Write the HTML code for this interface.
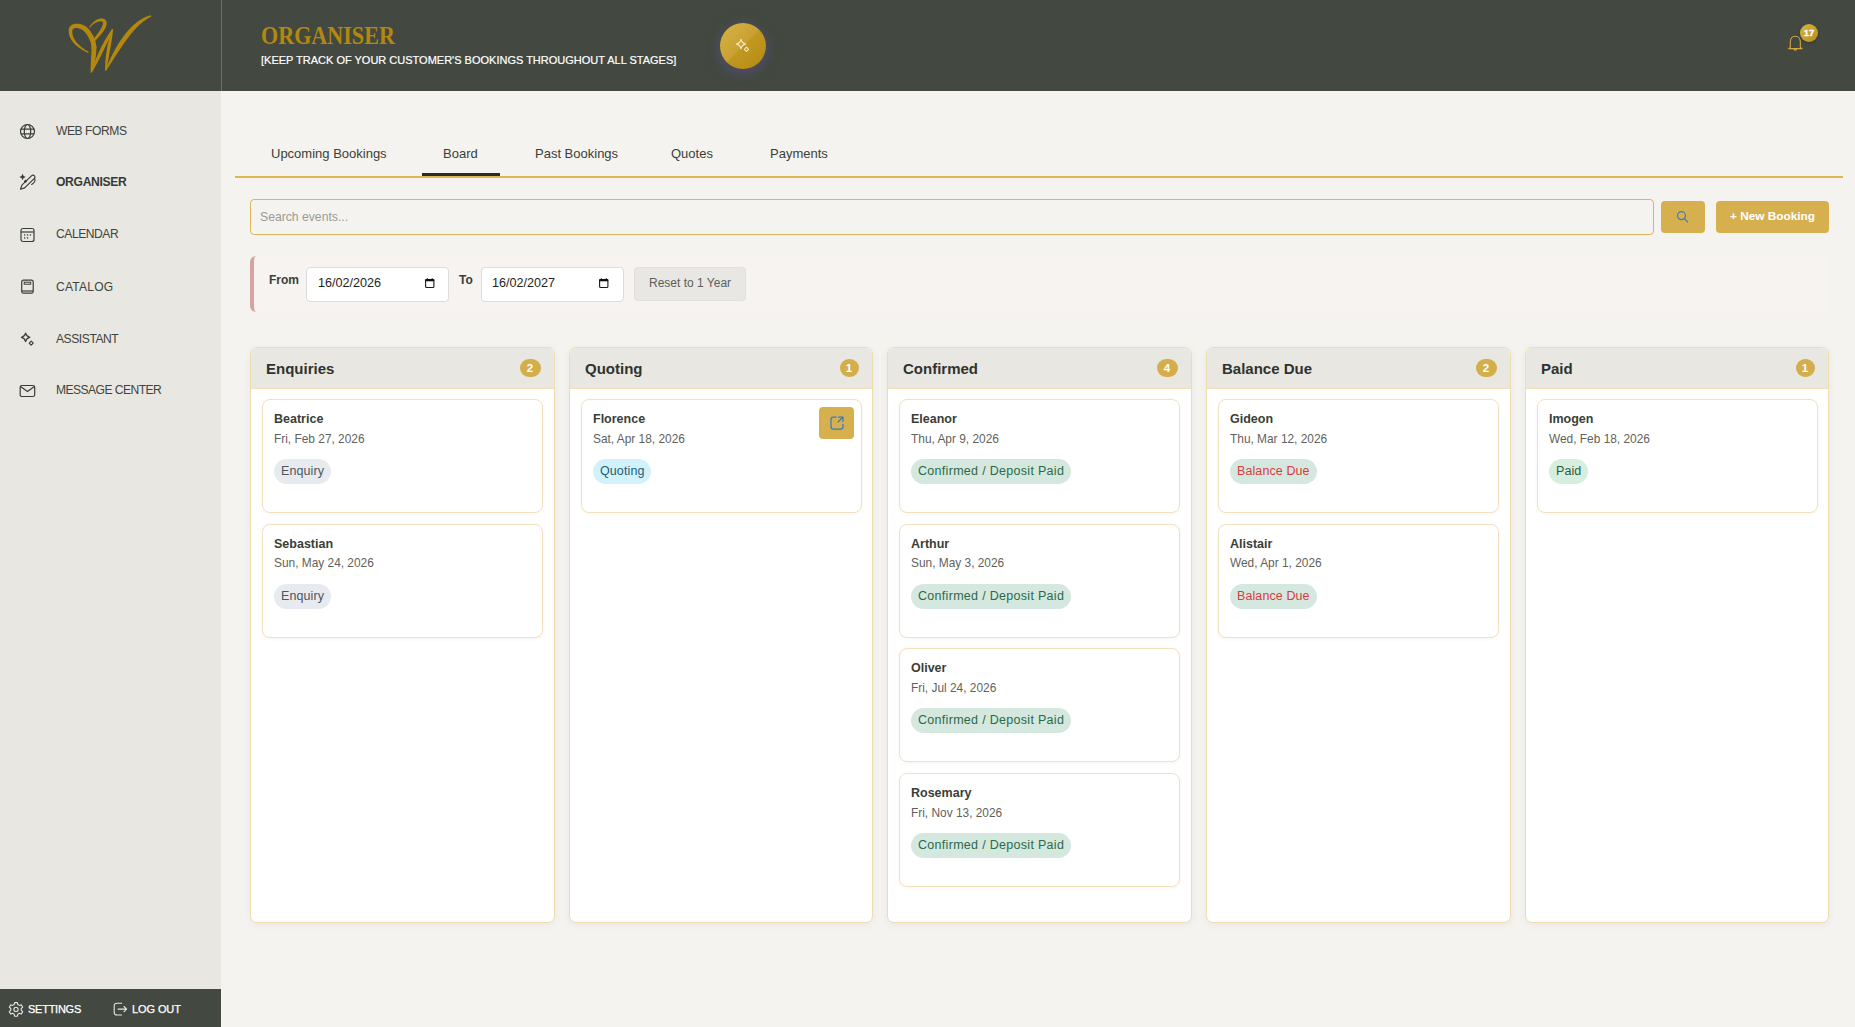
<!DOCTYPE html>
<html><head><meta charset="utf-8">
<style>
*{box-sizing:border-box;margin:0;padding:0}
html,body{width:1855px;height:1027px;overflow:hidden;background:#f4f3ef;font-family:"Liberation Sans",sans-serif;color:#3d4139}
.a{position:absolute}
.t{position:absolute;white-space:nowrap;line-height:1}
#hdr{left:0;top:0;width:1855px;height:91px;background:#434940}
#logoSep{left:221px;top:0;width:1px;height:91px;background:#6c706a}
#side{left:0;top:91px;width:221px;height:898px;background:#e9e7e2}
#sideBot{left:0;top:989px;width:221px;height:38px;background:#434940}
.nav{font-size:12.1px;color:#3f443c;letter-spacing:-0.45px}
.ico{position:absolute}
.tab{font-size:13px;color:#3b3f38}
.col{position:absolute;top:347px;width:305px;height:576px;background:#fff;border:1px solid #efdcb0;border-radius:7px;overflow:hidden;box-shadow:0 2px 8px rgba(0,0,0,0.05)}
.colh{position:absolute;left:0;top:0;right:0;height:41px;background:#e9e7e2;border-bottom:1px solid #f0dfb8}
.colt{position:absolute;left:15px;top:12.5px;font-size:15px;font-weight:700;color:#2f332d;line-height:1;white-space:nowrap}
.badge{position:absolute;top:11px;width:21px;height:18px;border-radius:9px;background:#d5ae4c;color:#fff;font-size:11.5px;font-weight:700;text-align:center;line-height:18px}
.card{position:absolute;left:11px;width:281px;height:114px;background:#fff;border:1px solid #f1e1bd;border-radius:8px;box-shadow:0 1px 4px rgba(0,0,0,0.04)}
.nm{position:absolute;left:11px;top:13px;font-size:12.5px;font-weight:700;color:#3a3e37;line-height:1;white-space:nowrap}
.dt{position:absolute;left:11px;top:33.5px;font-size:11.9px;color:#5f625c;line-height:1;white-space:nowrap}
.pill{position:absolute;left:11px;top:59px;height:25px;border-radius:13px;padding:0 7px 1px;font-size:12.5px;line-height:24px;white-space:nowrap;letter-spacing:0.1px}
.edit{position:absolute;right:7px;top:7px;width:35px;height:32px;border-radius:4px;background:#d6b04e;display:flex;align-items:center;justify-content:center}
.p-enq{background:#e7eaee;color:#4e5560}
.p-quo{background:#d2f2fb;color:#1f5d73}
.p-con{background:#d4e8df;color:#2a6a47;letter-spacing:0.3px}
.p-bal{background:#d4e8df;color:#dc3a3e}
.p-paid{background:#d6eede;color:#2a5c3c}
</style></head><body>

<!-- HEADER -->
<div class="a" id="hdr"></div>
<div class="a" id="logoSep"></div>
<svg class="a" style="left:0;top:0" width="221" height="91" viewBox="0 0 221 91"><g fill="#b3880c"><path d="M88.78,51.98 L88.02,51.53 L87.28,51.07 L86.54,50.60 L85.82,50.13 L85.10,49.66 L84.40,49.17 L83.70,48.69 L83.03,48.19 L82.36,47.70 L81.71,47.19 L81.07,46.68 L80.45,46.17 L79.85,45.64 L79.27,45.11 L78.70,44.58 L78.15,44.04 L77.63,43.50 L77.12,42.95 L76.64,42.39 L76.18,41.83 L75.74,41.26 L75.33,40.69 L74.94,40.11 L74.57,39.52 L74.23,38.94 L73.92,38.34 L73.63,37.74 L73.37,37.14 L73.14,36.53 L72.94,35.92 L72.76,35.30 L72.61,34.67 L72.49,34.04 L72.40,33.40 L72.34,32.75 L72.31,32.09 L72.30,31.43 L72.33,30.75 L72.39,30.10 L72.45,29.93 L72.54,29.71 L72.63,29.52 L72.75,29.34 L72.87,29.18 L73.01,29.04 L73.16,28.90 L73.33,28.77 L73.51,28.65 L73.72,28.54 L73.94,28.44 L74.19,28.34 L74.45,28.26 L74.74,28.18 L75.04,28.12 L75.36,28.08 L75.70,28.05 L76.06,28.03 L76.42,28.03 L76.80,28.04 L77.20,28.08 L77.60,28.12 L78.00,28.19 L78.42,28.28 L78.84,28.38 L79.26,28.50 L79.69,28.64 L80.11,28.79 L80.54,28.96 L80.96,29.16 L81.37,29.36 L81.79,29.59 L82.19,29.83 L82.59,30.09 L82.98,30.37 L83.37,30.66 L83.74,30.97 L84.09,31.29 L84.39,31.59 L84.71,31.97 L85.09,32.43 L85.45,32.88 L85.80,33.34 L86.13,33.79 L86.46,34.24 L86.77,34.69 L87.08,35.14 L87.37,35.58 L87.65,36.03 L87.92,36.47 L88.18,36.92 L88.42,37.36 L88.66,37.80 L88.89,38.24 L89.11,38.68 L89.31,39.12 L89.51,39.55 L89.70,39.99 L89.87,40.42 L90.04,40.86 L90.20,41.29 L90.35,41.72 L90.49,42.15 L90.62,42.58 L90.74,43.02 L90.85,43.45 L90.95,43.88 L91.05,44.31 L91.14,44.74 L91.21,45.17 L91.28,45.60 L91.35,46.03 L91.40,46.46 L91.44,46.89 L91.48,47.32 L91.51,47.75 L91.53,48.18 L91.54,48.64 L96.34,48.59 L96.34,48.09 L96.34,47.56 L96.32,47.03 L96.29,46.51 L96.25,45.98 L96.20,45.45 L96.14,44.92 L96.06,44.39 L95.98,43.86 L95.88,43.34 L95.78,42.81 L95.66,42.28 L95.53,41.75 L95.39,41.22 L95.23,40.70 L95.07,40.17 L94.89,39.64 L94.70,39.12 L94.50,38.59 L94.29,38.07 L94.07,37.55 L93.83,37.02 L93.58,36.50 L93.32,35.98 L93.05,35.46 L92.77,34.95 L92.47,34.43 L92.16,33.91 L91.84,33.40 L91.51,32.89 L91.17,32.38 L90.81,31.86 L90.44,31.36 L90.06,30.85 L89.67,30.34 L89.26,29.84 L88.85,29.33 L88.42,28.83 L87.91,28.26 L87.36,27.73 L86.83,27.28 L86.30,26.86 L85.75,26.47 L85.19,26.10 L84.62,25.76 L84.04,25.44 L83.45,25.15 L82.86,24.88 L82.27,24.64 L81.67,24.43 L81.07,24.24 L80.47,24.08 L79.87,23.94 L79.27,23.83 L78.67,23.74 L78.08,23.68 L77.49,23.64 L76.90,23.63 L76.32,23.64 L75.75,23.69 L75.19,23.76 L74.64,23.85 L74.10,23.98 L73.56,24.13 L73.05,24.32 L72.55,24.53 L72.06,24.78 L71.59,25.07 L71.15,25.38 L70.73,25.74 L70.35,26.13 L69.99,26.55 L69.67,27.00 L69.40,27.49 L69.17,28.00 L68.99,28.54 L68.86,29.09 L68.76,29.74 L68.74,30.64 L68.75,31.48 L68.81,32.31 L68.91,33.13 L69.04,33.93 L69.21,34.72 L69.42,35.49 L69.66,36.25 L69.93,36.99 L70.24,37.71 L70.57,38.42 L70.94,39.11 L71.33,39.79 L71.75,40.45 L72.19,41.10 L72.66,41.73 L73.15,42.34 L73.67,42.95 L74.21,43.54 L74.76,44.11 L75.34,44.68 L75.94,45.23 L76.55,45.77 L77.18,46.29 L77.83,46.81 L78.49,47.32 L79.17,47.81 L79.86,48.29 L80.57,48.77 L81.29,49.23 L82.02,49.69 L82.76,50.14 L83.51,50.58 L84.27,51.01 L85.05,51.43 L85.82,51.84 L86.61,52.25 L87.40,52.65 L88.20,53.03Z"/>
<path d="M91.62,46.25 L91.59,47.02 L91.57,47.77 L91.54,48.53 L91.51,49.28 L91.47,50.02 L91.44,50.77 L91.41,51.51 L91.37,52.24 L91.33,52.98 L91.30,53.71 L91.26,54.43 L91.22,55.15 L91.18,55.87 L91.14,56.59 L91.11,57.30 L91.07,58.00 L91.03,58.70 L90.99,59.40 L90.96,60.09 L90.92,60.77 L90.89,61.46 L90.86,62.13 L90.83,62.80 L90.80,63.47 L90.77,64.13 L90.75,64.78 L90.73,65.43 L90.71,66.07 L90.69,66.71 L90.68,67.33 L90.67,67.96 L90.66,68.57 L90.66,69.18 L90.66,69.78 L90.66,70.38 L90.67,70.96 L90.68,71.54 L90.70,72.11 L90.72,72.67 L91.71,72.84 L91.91,72.31 L92.11,71.78 L92.31,71.23 L92.51,70.68 L92.70,70.12 L92.89,69.54 L93.08,68.96 L93.26,68.37 L93.45,67.77 L93.62,67.16 L93.80,66.54 L93.97,65.91 L94.14,65.27 L94.30,64.63 L94.46,63.97 L94.61,63.31 L94.76,62.64 L94.90,61.97 L95.04,61.28 L95.18,60.59 L95.30,59.89 L95.43,59.19 L95.54,58.47 L95.65,57.75 L95.75,57.03 L95.85,56.30 L95.94,55.56 L96.02,54.81 L96.10,54.06 L96.17,53.31 L96.23,52.55 L96.28,51.78 L96.33,51.01 L96.36,50.23 L96.39,49.45 L96.41,48.67 L96.42,47.88 L96.43,47.09 L96.42,46.30Z"/>
<path d="M93.95,42.22 L94.41,41.71 L94.86,41.21 L95.32,40.71 L95.78,40.22 L96.23,39.72 L96.69,39.23 L97.14,38.73 L97.59,38.24 L98.04,37.75 L98.49,37.26 L98.93,36.77 L99.36,36.28 L99.79,35.80 L100.22,35.31 L100.63,34.83 L101.04,34.34 L101.45,33.86 L101.84,33.38 L102.22,32.89 L102.59,32.41 L102.95,31.93 L103.30,31.44 L103.64,30.96 L103.97,30.47 L104.28,29.99 L104.57,29.50 L104.86,29.01 L105.12,28.52 L105.37,28.02 L105.60,27.53 L105.81,27.03 L106.00,26.53 L106.17,26.02 L106.31,25.51 L106.43,25.00 L106.53,24.48 L106.60,23.96 L106.64,23.44 L106.64,22.91 L106.61,22.43 L106.53,21.96 L106.39,21.50 L106.21,21.07 L105.98,20.66 L105.70,20.28 L105.39,19.93 L105.05,19.63 L104.68,19.35 L104.29,19.12 L103.87,18.92 L103.44,18.76 L102.99,18.63 L102.53,18.54 L102.05,18.48 L101.57,18.46 L101.07,18.47 L100.57,18.51 L100.05,18.58 L99.53,18.69 L99.01,18.82 L98.47,19.00 L97.93,19.20 L97.39,19.44 L96.83,19.71 L96.28,20.01 L95.72,20.35 L95.16,20.72 L94.60,21.13 L94.03,21.58 L93.47,22.06 L92.90,22.58 L92.33,23.14 L91.76,23.74 L91.20,24.38 L90.63,25.05 L90.07,25.77 L89.51,26.54 L88.95,27.34 L89.58,27.83 L90.23,27.12 L90.86,26.46 L91.49,25.85 L92.12,25.28 L92.73,24.76 L93.34,24.28 L93.93,23.84 L94.52,23.44 L95.10,23.08 L95.66,22.76 L96.20,22.47 L96.74,22.22 L97.25,22.01 L97.75,21.83 L98.24,21.68 L98.70,21.56 L99.14,21.47 L99.57,21.40 L99.97,21.37 L100.34,21.35 L100.70,21.36 L101.03,21.39 L101.33,21.43 L101.61,21.49 L101.86,21.57 L102.08,21.66 L102.28,21.75 L102.45,21.85 L102.59,21.95 L102.71,22.06 L102.81,22.16 L102.88,22.26 L102.94,22.35 L102.98,22.44 L103.01,22.53 L103.03,22.62 L103.04,22.71 L103.05,22.80 L103.04,22.92 L103.03,23.23 L102.99,23.56 L102.94,23.89 L102.88,24.23 L102.79,24.59 L102.69,24.95 L102.57,25.32 L102.43,25.70 L102.27,26.10 L102.10,26.50 L101.91,26.91 L101.70,27.32 L101.48,27.75 L101.24,28.18 L100.99,28.62 L100.72,29.07 L100.44,29.53 L100.15,29.99 L99.84,30.46 L99.53,30.94 L99.20,31.42 L98.86,31.90 L98.52,32.40 L98.16,32.90 L97.80,33.40 L97.43,33.91 L97.06,34.43 L96.68,34.95 L96.29,35.47 L95.91,36.00 L95.52,36.54 L95.12,37.08 L94.73,37.62 L94.33,38.17 L93.94,38.73 L93.54,39.29 L93.15,39.85 L92.76,40.42 L92.37,40.99Z"/>
<path d="M92.06,72.18 L92.72,71.04 L93.37,69.90 L94.01,68.76 L94.65,67.62 L95.28,66.48 L95.91,65.34 L96.53,64.20 L97.14,63.07 L97.75,61.94 L98.35,60.81 L98.94,59.68 L99.53,58.55 L100.11,57.42 L100.69,56.30 L101.26,55.18 L101.82,54.07 L102.37,52.95 L102.92,51.84 L103.47,50.73 L104.00,49.63 L104.54,48.53 L105.06,47.43 L105.58,46.33 L106.09,45.24 L106.60,44.16 L107.10,43.07 L107.59,41.99 L108.08,40.92 L108.57,39.85 L109.04,38.78 L109.51,37.72 L109.98,36.66 L110.44,35.61 L110.89,34.56 L111.34,33.52 L111.78,32.48 L112.21,31.44 L112.64,30.41 L113.07,29.39 L112.20,28.90 L111.54,29.80 L110.89,30.71 L110.25,31.64 L109.62,32.58 L108.98,33.54 L108.36,34.50 L107.74,35.48 L107.13,36.47 L106.52,37.47 L105.92,38.48 L105.32,39.50 L104.73,40.53 L104.15,41.58 L103.57,42.63 L103.00,43.70 L102.43,44.77 L101.87,45.85 L101.32,46.95 L100.77,48.05 L100.23,49.16 L99.70,50.28 L99.17,51.41 L98.64,52.55 L98.13,53.70 L97.62,54.85 L97.12,56.01 L96.62,57.18 L96.13,58.36 L95.64,59.55 L95.17,60.74 L94.69,61.94 L94.23,63.15 L93.77,64.36 L93.32,65.58 L92.87,66.81 L92.43,68.04 L92.00,69.28 L91.57,70.52 L91.15,71.77Z"/>
<path d="M112.05,29.01 L111.70,30.00 L111.36,31.00 L111.03,32.00 L110.71,33.00 L110.40,34.00 L110.09,35.01 L109.80,36.02 L109.51,37.03 L109.24,38.05 L108.97,39.06 L108.71,40.09 L108.46,41.11 L108.22,42.14 L107.98,43.17 L107.76,44.21 L107.55,45.24 L107.34,46.29 L107.15,47.33 L106.96,48.38 L106.78,49.44 L106.61,50.50 L106.45,51.56 L106.30,52.63 L106.16,53.70 L106.03,54.77 L105.90,55.86 L105.79,56.94 L105.68,58.03 L105.59,59.13 L105.50,60.23 L105.42,61.33 L105.35,62.44 L105.29,63.56 L105.24,64.68 L105.20,65.81 L105.17,66.94 L105.14,68.08 L105.13,69.22 L105.13,70.37 L106.12,70.47 L106.36,69.35 L106.59,68.24 L106.83,67.13 L107.05,66.02 L107.28,64.93 L107.50,63.83 L107.72,62.75 L107.94,61.66 L108.15,60.59 L108.36,59.51 L108.57,58.44 L108.78,57.38 L108.98,56.31 L109.18,55.26 L109.37,54.20 L109.57,53.15 L109.76,52.10 L109.94,51.05 L110.13,50.01 L110.31,48.96 L110.49,47.92 L110.66,46.88 L110.84,45.85 L111.01,44.81 L111.17,43.78 L111.34,42.74 L111.50,41.71 L111.66,40.68 L111.81,39.64 L111.96,38.61 L112.11,37.58 L112.26,36.54 L112.41,35.51 L112.55,34.48 L112.69,33.44 L112.82,32.40 L112.96,31.36 L113.09,30.32 L113.22,29.28Z"/>
<path d="M106.06,70.66 L107.12,69.06 L108.18,67.44 L109.25,65.81 L110.31,64.17 L111.37,62.51 L112.44,60.85 L113.51,59.19 L114.58,57.53 L115.66,55.86 L116.73,54.20 L117.81,52.54 L118.90,50.90 L119.99,49.26 L121.08,47.63 L122.18,46.02 L123.28,44.42 L124.39,42.84 L125.50,41.28 L126.62,39.74 L127.75,38.23 L128.88,36.75 L130.02,35.29 L131.17,33.86 L132.33,32.47 L133.49,31.11 L134.67,29.78 L135.86,28.49 L137.05,27.24 L138.26,26.03 L139.49,24.86 L140.73,23.74 L141.98,22.66 L143.26,21.62 L144.55,20.64 L145.86,19.70 L147.20,18.81 L148.56,17.98 L149.96,17.19 L151.40,16.46 L150.97,15.34 L149.38,15.76 L147.78,16.28 L146.21,16.87 L144.65,17.55 L143.10,18.31 L141.58,19.14 L140.09,20.05 L138.61,21.02 L137.16,22.07 L135.74,23.17 L134.34,24.34 L132.96,25.56 L131.61,26.83 L130.29,28.16 L129.00,29.54 L127.73,30.96 L126.48,32.42 L125.27,33.92 L124.08,35.46 L122.91,37.03 L121.77,38.64 L120.66,40.27 L119.57,41.93 L118.50,43.62 L117.46,45.32 L116.44,47.05 L115.45,48.79 L114.47,50.55 L113.53,52.32 L112.60,54.10 L111.69,55.88 L110.81,57.67 L109.95,59.47 L109.10,61.26 L108.28,63.06 L107.48,64.85 L106.69,66.64 L105.93,68.42 L105.18,70.18Z"/>
</g></svg>
<div class="t" style="left:261px;top:23px;font-family:'Liberation Serif',serif;font-weight:700;font-size:26px;color:#b3880c;transform:scaleX(0.85);transform-origin:0 0">ORGANISER</div>
<div class="t" style="left:261px;top:55px;font-size:11px;color:#ffffff;-webkit-text-stroke:0.2px #fff">[KEEP TRACK OF YOUR CUSTOMER'S BOOKINGS THROUGHOUT ALL STAGES]</div>
<div class="a" style="left:720px;top:23px;width:46px;height:46px;border-radius:50%;background:linear-gradient(135deg,#d8b347 0%,#c9a132 49%,#c0981f 51%,#b78a15 100%);box-shadow:0 3px 10px 3px rgba(88,78,125,0.55)"></div>
<svg class="a" style="left:733px;top:36px" width="20" height="20" viewBox="0 0 20 20">
  <g fill="none" stroke="#f4e9c8" stroke-width="1.1" stroke-linejoin="round">
    <path d="M8,3.2 Q8.6,7.2 12.6,8.1 Q8.6,9 8,13 Q7.4,9 3.4,8.1 Q7.4,7.2 8,3.2Z"/>
    <path d="M13.5,11.2 L15.6,13.3 L13.5,15.4 L11.4,13.3Z"/>
  </g>
</svg>
<!-- bell -->
<svg class="a" style="left:1786px;top:34px" width="19" height="19" viewBox="0 0 19 19">
  <path d="M4.3,13.3 V8.2 C4.3,4.6 6.2,2.2 9.3,2.2 C12.4,2.2 14.3,4.6 14.3,8.2 V13.3 L16,14.6 H2.6 Z M8,14.8 C8,16.6 10.6,16.6 10.6,14.8" fill="none" stroke="#d6a93e" stroke-width="1.05" stroke-linejoin="round"/>
</svg>
<div class="a" style="left:1800px;top:24px;width:18px;height:18px;border-radius:50%;background:linear-gradient(135deg,#d9b347,#b88e1c);box-shadow:0 1px 3px rgba(0,0,0,0.25);color:#fff;font-size:9.5px;font-weight:700;text-align:center;line-height:18px;-webkit-text-stroke:0.3px #fff">17</div>

<!-- SIDEBAR -->
<div class="a" id="side"></div>
<div class="a" id="sideBot"></div>

<!-- nav icons -->
<svg class="a" style="left:19px;top:123px" width="17" height="17" viewBox="0 0 17 17">
  <g fill="none" stroke="#3a3e37" stroke-width="1.2">
    <circle cx="8.5" cy="8.5" r="7"/>
    <ellipse cx="8.5" cy="8.5" rx="3.2" ry="7"/>
    <path d="M1.8,6.2 H15.2 M1.8,10.8 H15.2"/>
  </g>
</svg>
<div class="t nav" style="left:56px;top:125px">WEB FORMS</div>
<svg class="a" style="left:19px;top:173px" width="20" height="20" viewBox="0 0 20 20">
  <g fill="none" stroke="#383c35" stroke-width="1.15" stroke-linejoin="round" stroke-linecap="round">
    <path d="M1.5,16.3 L2.9,12.2 L12.7,2.6 A1.95,1.95 0 0 1 15.45,5.35 L5.65,14.9 Z"/>
    <path d="M15.6,5.6 C16.6,7.4 15.6,9.6 12.7,11.5"/>
  </g>
  <path d="M3.55,0.7 Q3.95,3.5 6.8,3.94 Q3.95,4.4 3.55,7.2 Q3.15,4.4 0.3,3.94 Q3.15,3.5 3.55,0.7Z" fill="#383c35"/>
  <path d="M6.5,6.6 L8.2,8.3 L6.5,10 L4.8,8.3Z" fill="#383c35"/>
</svg>
<div class="t nav" style="left:56px;top:176px;font-weight:700;font-size:12.1px;letter-spacing:-0.3px;color:#363a33">ORGANISER</div>
<svg class="a" style="left:20px;top:227px" width="15" height="16" viewBox="0 0 15 16">
  <g fill="none" stroke="#3a3e37" stroke-width="1.2">
    <rect x="1" y="1.5" width="13" height="13" rx="2"/>
    <path d="M1,5 H14"/>
  </g>
  <g fill="#3a3e37">
    <rect x="4" y="7.3" width="1.3" height="1.3"/><rect x="6.9" y="7.3" width="1.3" height="1.3"/><rect x="9.8" y="7.3" width="1.3" height="1.3"/>
    <rect x="4" y="10.3" width="1.3" height="1.3"/><rect x="6.9" y="10.3" width="1.3" height="1.3"/>
  </g>
</svg>
<div class="t nav" style="left:56px;top:228px">CALENDAR</div>
<svg class="a" style="left:20px;top:279px" width="15" height="16" viewBox="0 0 15 16">
  <g fill="none" stroke="#3a3e37" stroke-width="1.2">
    <rect x="1.7" y="1.2" width="11.5" height="13" rx="1.8"/>
    <path d="M1.7,12 H13.2"/>
  </g>
  <rect x="4.2" y="3.2" width="6.5" height="2" fill="none" stroke="#3a3e37" stroke-width="1"/>
</svg>
<div class="t nav" style="left:56px;top:281px;letter-spacing:0.2px">CATALOG</div>
<svg class="a" style="left:20px;top:331px" width="16" height="16" viewBox="0 0 16 16">
  <g fill="none" stroke="#3a3e37" stroke-width="1.2" stroke-linejoin="round">
    <path d="M5.6,2.2 Q6.4,5.6 9.8,6.4 Q6.4,7.2 5.6,10.6 Q4.8,7.2 1.4,6.4 Q4.8,5.6 5.6,2.2Z"/>
    <path d="M11.2,10.1 L13.2,12.1 L11.2,14.1 L9.2,12.1Z"/>
  </g>
</svg>
<div class="t nav" style="left:56px;top:333px">ASSISTANT</div>
<svg class="a" style="left:19px;top:384px" width="17" height="14" viewBox="0 0 17 14">
  <g fill="none" stroke="#3a3e37" stroke-width="1.2" stroke-linejoin="round">
    <rect x="1.2" y="1.5" width="14.5" height="11" rx="1.8"/>
    <path d="M1.5,2.5 L8.45,7.6 L15.4,2.5"/>
  </g>
</svg>
<div class="t nav" style="left:56px;top:384px;letter-spacing:-0.55px">MESSAGE CENTER</div>

<!-- bottom bar -->

<svg class="a" style="left:7px;top:1000.7px" width="18" height="18" viewBox="0 0 18 18">
  <path d="M7.6,1.6 L10.4,1.6 L10.8,3.6 C11.4,3.8 11.9,4.1 12.4,4.5 L14.3,3.8 L15.7,6.2 L14.2,7.5 C14.3,8.1 14.3,8.7 14.2,9.3 L15.7,10.6 L14.3,13 L12.4,12.3 C11.9,12.7 11.4,13 10.8,13.2 L10.4,15.2 L7.6,15.2 L7.2,13.2 C6.6,13 6.1,12.7 5.6,12.3 L3.7,13 L2.3,10.6 L3.8,9.3 C3.7,8.7 3.7,8.1 3.8,7.5 L2.3,6.2 L3.7,3.8 L5.6,4.5 C6.1,4.1 6.6,3.8 7.2,3.6 Z" fill="#434940" stroke="#e6e6e4" stroke-width="1.1" stroke-linejoin="round"/>
  <circle cx="9" cy="8.4" r="2.1" fill="none" stroke="#e6e6e4" stroke-width="1.1"/>
</svg>
<div class="t" style="left:28px;top:1003.5px;font-size:11px;letter-spacing:-0.25px;color:#fff;-webkit-text-stroke:0.25px #fff">SETTINGS</div>
<svg class="a" style="left:112px;top:1001px" width="17" height="16" viewBox="0 0 17 16">
  <g fill="none" stroke="#e6e6e4" stroke-width="1.1" stroke-linecap="round" stroke-linejoin="round">
    <path d="M9.6,2.2 H5 C3.3,2.2 2.2,3.3 2.2,5 V11.2 C2.2,12.9 3.3,14 5,14 H9.6"/>
    <path d="M6,8.1 H14.6 M12,5.5 L14.6,8.1 L12,10.7"/>
  </g>
</svg>
<div class="t" style="left:132px;top:1003.5px;font-size:11px;letter-spacing:-0.1px;color:#fff;-webkit-text-stroke:0.25px #fff">LOG OUT</div>

<!-- TABS -->
<div class="t tab" style="left:271px;top:147px">Upcoming Bookings</div>
<div class="t tab" style="left:443px;top:147px">Board</div>
<div class="t tab" style="left:535px;top:147px">Past Bookings</div>
<div class="t tab" style="left:671px;top:147px">Quotes</div>
<div class="t tab" style="left:770px;top:147px">Payments</div>
<div class="a" style="left:235px;top:176px;width:1608px;height:2px;background:#dfb652"></div>
<div class="a" style="left:422px;top:173px;width:78px;height:3px;background:#2a2b29"></div>

<!-- SEARCH -->
<div class="a" style="left:250px;top:199px;width:1404px;height:36px;border:1px solid #ddb65a;border-radius:4px;background:#f5f3ef"></div>
<div class="t" style="left:260px;top:211px;font-size:12.2px;color:#9a9a98">Search events...</div>
<div class="a" style="left:1661px;top:201px;width:44px;height:32px;border-radius:4px;background:#d6b04e"></div>
<svg class="a" style="left:1676px;top:210px" width="14" height="14" viewBox="0 0 14 14">
  <g fill="none" stroke="#3a7fc4" stroke-width="1.2" stroke-linecap="round">
    <circle cx="5.5" cy="5.7" r="4"/>
    <path d="M8.4,8.8 L11.6,11.8"/>
  </g>
</svg>
<div class="a" style="left:1716px;top:201px;width:113px;height:32px;border-radius:4px;background:#d6b04e"></div>
<div class="t" style="left:1730px;top:211px;font-size:11.8px;font-weight:700;color:#fff">+ New Booking</div>

<!-- DATE FILTER -->
<div class="a" style="left:250px;top:256px;width:1579px;height:56px;border-left:4px solid #d6a3a3;border-radius:6px;background:#f6f3f0"></div>
<div class="t" style="left:269px;top:274px;font-size:12px;font-weight:700;color:#3a3e37">From</div>
<div class="a" style="left:306px;top:267px;width:143px;height:35px;border:1px solid #dcdcdc;border-radius:4px;background:#fff"></div>
<div class="t" style="left:318px;top:277px;font-size:12.6px;color:#1e1e1e">16/02/2026</div>
<svg class="a" style="left:424px;top:277px" width="12" height="12" viewBox="0 0 12 12"><rect x="1.6" y="2.5" width="8.3" height="8" rx="1" fill="none" stroke="#1a1a1a" stroke-width="1.1"/><rect x="1.3" y="2.2" width="8.9" height="2.1" fill="#111"/><path d="M3.3,1.2 V2.6 M8.2,1.2 V2.6" stroke="#111" stroke-width="1"/></svg>
<div class="t" style="left:459px;top:274px;font-size:12px;font-weight:700;color:#3a3e37">To</div>
<div class="a" style="left:481px;top:267px;width:143px;height:35px;border:1px solid #dcdcdc;border-radius:4px;background:#fff"></div>
<div class="t" style="left:492px;top:277px;font-size:12.6px;color:#1e1e1e">16/02/2027</div>
<svg class="a" style="left:598px;top:277px" width="12" height="12" viewBox="0 0 12 12"><rect x="1.6" y="2.5" width="8.3" height="8" rx="1" fill="none" stroke="#1a1a1a" stroke-width="1.1"/><rect x="1.3" y="2.2" width="8.9" height="2.1" fill="#111"/><path d="M3.3,1.2 V2.6 M8.2,1.2 V2.6" stroke="#111" stroke-width="1"/></svg>
<div class="a" style="left:634px;top:267px;width:112px;height:34px;border:1px solid #e2e0dc;border-radius:4px;background:#e8e7e4"></div>
<div class="t" style="left:649px;top:277px;font-size:12px;color:#5b5e58">Reset to 1 Year</div>

<!-- BOARD -->
<div class="col" style="left:250px">
  <div class="colh"><div class="colt">Enquiries</div><div class="badge" style="right:13.5px">2</div></div>
  <div class="card" style="top:51.00px"><div class="nm">Beatrice</div><div class="dt">Fri, Feb 27, 2026</div><div class="pill p-enq">Enquiry</div></div>
  <div class="card" style="top:175.67px"><div class="nm">Sebastian</div><div class="dt">Sun, May 24, 2026</div><div class="pill p-enq">Enquiry</div></div>
</div>
<div class="col" style="left:569px;width:304px">
  <div class="colh"><div class="colt">Quoting</div><div class="badge" style="right:13.5px;width:19px">1</div></div>
  <div class="card" style="top:51.00px"><div class="nm">Florence</div><div class="dt">Sat, Apr 18, 2026</div><div class="pill p-quo">Quoting</div><div class="edit"><svg width="14" height="14" viewBox="0 0 14 14"><g fill="none" stroke="#2f7fc6" stroke-width="1.25" stroke-linecap="round" stroke-linejoin="round"><path d="M6.2,1 H3.2 C1.8,1 1,1.8 1,3.2 V10.8 C1,12.2 1.8,13 3.2,13 H10.8 C12.2,13 13,12.2 13,10.8 V8.4"/><path d="M8.4,1 H13 V5.4 M12.8,1.2 L8,6"/></g></svg></div></div>
</div>
<div class="col" style="left:887px">
  <div class="colh"><div class="colt">Confirmed</div><div class="badge" style="right:13.5px">4</div></div>
  <div class="card" style="top:51.00px"><div class="nm">Eleanor</div><div class="dt">Thu, Apr 9, 2026</div><div class="pill p-con">Confirmed / Deposit Paid</div></div>
  <div class="card" style="top:175.67px"><div class="nm">Arthur</div><div class="dt">Sun, May 3, 2026</div><div class="pill p-con">Confirmed / Deposit Paid</div></div>
  <div class="card" style="top:300.34px"><div class="nm">Oliver</div><div class="dt">Fri, Jul 24, 2026</div><div class="pill p-con">Confirmed / Deposit Paid</div></div>
  <div class="card" style="top:425.01px"><div class="nm">Rosemary</div><div class="dt">Fri, Nov 13, 2026</div><div class="pill p-con">Confirmed / Deposit Paid</div></div>
</div>
<div class="col" style="left:1206px">
  <div class="colh"><div class="colt">Balance Due</div><div class="badge" style="right:13.5px">2</div></div>
  <div class="card" style="top:51.00px"><div class="nm">Gideon</div><div class="dt">Thu, Mar 12, 2026</div><div class="pill p-bal">Balance Due</div></div>
  <div class="card" style="top:175.67px"><div class="nm">Alistair</div><div class="dt">Wed, Apr 1, 2026</div><div class="pill p-bal">Balance Due</div></div>
</div>
<div class="col" style="left:1525px;width:304px">
  <div class="colh"><div class="colt">Paid</div><div class="badge" style="right:13.5px;width:19px">1</div></div>
  <div class="card" style="top:51.00px"><div class="nm">Imogen</div><div class="dt">Wed, Feb 18, 2026</div><div class="pill p-paid">Paid</div></div>
</div>
</body></html>
